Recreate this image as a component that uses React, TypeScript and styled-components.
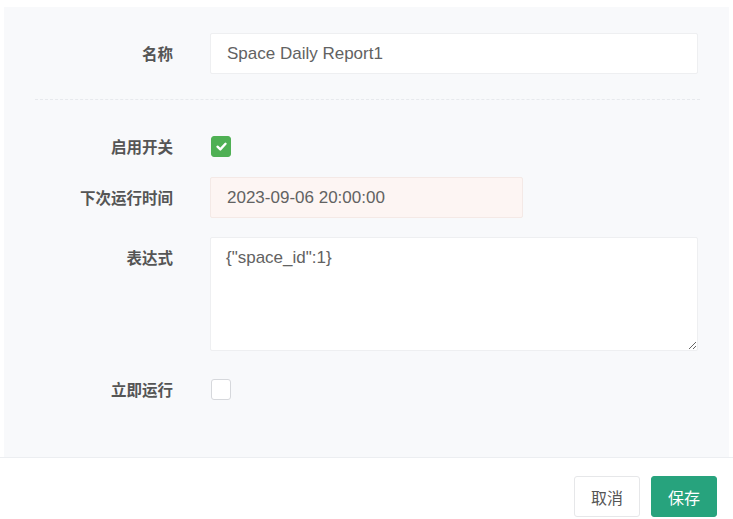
import { ReactElement } from 'react';
import styled, { createGlobalStyle } from 'styled-components';

const GlobalStyle = createGlobalStyle`
  html, body {
    margin: 0;
    padding: 0;
    background: #ffffff;
  }
  body {
    font-family: 'Liberation Sans', 'Noto Sans CJK SC', sans-serif;
    color: #555;
  }
  * {
    box-sizing: border-box;
  }
`;

export default function App(): ReactElement {
  return (
    <>
      <GlobalStyle />
      <Dialog>
        <Panel>
          <Row>
            <Label>名称</Label>
            <TextInput defaultValue='Space Daily Report1' readOnly />
          </Row>
          <Divider />
          <Row top={26}>
            <Label>启用开关</Label>
            <Check checked>
              <svg width='13' height='13' viewBox='0 0 12 12'>
                <path
                  d='M2.3 6.2 L4.9 8.7 L9.7 3.5'
                  fill='none'
                  stroke='#fff'
                  strokeWidth='2.2'
                  strokeLinecap='round'
                  strokeLinejoin='round'
                />
              </svg>
            </Check>
          </Row>
          <Row top={10}>
            <Label>下次运行时间</Label>
            <TextInput
              defaultValue='2023-09-06 20:00:00'
              readOnly
              disabledLook
              narrow
            />
          </Row>
          <Row top={19}>
            <Label>表达式</Label>
            <TextArea defaultValue={'{"space_id":1}'} />
          </Row>
          <Row top={18}>
            <Label>立即运行</Label>
            <Check />
          </Row>
        </Panel>
        <Footer>
          <Button>取消</Button>
          <Button primary>保存</Button>
        </Footer>
      </Dialog>
    </>
  );
}

const Dialog = styled.div`
  width: 733px;
  height: 519px;
  display: flex;
  flex-direction: column;
  overflow: hidden;
`;

const Panel = styled.div`
  margin: 7px 4px 0 4px;
  height: 450px;
  background: #f8f9fb;
  padding: 26px 31px 0 0;
  display: flex;
  flex-direction: column;
`;

const Row = styled.div<{ top?: number }>`
  display: grid;
  grid-template-columns: 169px 1fr;
  column-gap: 37px;
  align-items: start;
  margin-top: ${(props) => props.top || 0}px;
`;

const Label = styled.div`
  height: 41px;
  line-height: 41px;
  text-align: right;
  font-size: 15.5px;
  font-weight: bold;
  color: #555;
  font-family: 'Noto Sans CJK SC', 'Liberation Sans', sans-serif;
  white-space: nowrap;
`;

const TextInput = styled.input<{ disabledLook?: boolean; narrow?: boolean }>`
  width: ${(props) => (props.narrow ? '313px' : '100%')};
  height: 41px;
  padding: 0 16px;
  font-size: 17px;
  font-family: 'Liberation Sans', sans-serif;
  color: #626262;
  background: ${(props) => (props.disabledLook ? '#fdf5f3' : '#ffffff')};
  border: 1px solid ${(props) => (props.disabledLook ? '#f4e9e6' : '#eeeff1')};
  border-radius: 2px;
  outline: none;
`;

const TextArea = styled.textarea`
  width: 100%;
  height: 114px;
  padding: 10px 15px;
  font-size: 17px;
  line-height: 20px;
  font-family: 'Liberation Sans', sans-serif;
  color: #626262;
  background: #ffffff;
  border: 1px solid #eeeff1;
  border-radius: 2px;
  outline: none;
  resize: vertical;
`;

const Check = styled.span<{ checked?: boolean }>`
  margin: 10px 0 0 1px;
  width: 20px;
  height: 21px;
  border-radius: 3px;
  display: flex;
  align-items: center;
  justify-content: center;
  background: ${(props) => (props.checked ? '#4fb054' : '#ffffff')};
  border: 1px solid ${(props) => (props.checked ? '#4fb054' : '#d6d8dc')};
`;

const Divider = styled.div`
  margin: 25px -2px 0 31px;
  height: 0;
  border-top: 1px dashed #e7e9ed;
`;

const Footer = styled.div`
  border-top: 1px solid #eceef1;
  display: flex;
  justify-content: flex-end;
  gap: 11px;
  padding: 18px 16px 0 0;
`;

const Button = styled.button<{ primary?: boolean }>`
  width: 66px;
  height: 41px;
  font-size: 16px;
  font-family: 'Noto Sans CJK SC', 'Liberation Sans', sans-serif;
  border-radius: 3px;
  border: 1px solid ${(props) => (props.primary ? '#27a37d' : '#e6e7e9')};
  background: ${(props) => (props.primary ? '#27a37d' : '#ffffff')};
  color: ${(props) => (props.primary ? '#ffffff' : '#555')};
  cursor: pointer;
`;
